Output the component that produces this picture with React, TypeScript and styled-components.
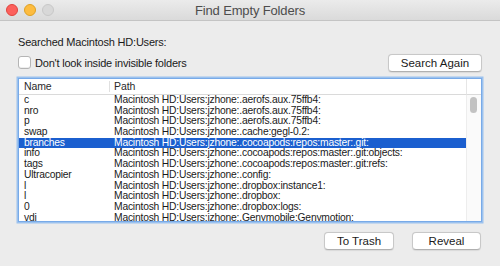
import React from "react";
import styled, { createGlobalStyle } from "styled-components";

const Global = createGlobalStyle`
  html, body { margin: 0; padding: 0; background: #ececec; }
  body { font-family: "Liberation Sans", Arial, sans-serif; color: #1a1a1a; }
  * { box-sizing: border-box; }
`;

const Window = styled.div`
  width: 500px;
  height: 266px;
  display: flex;
  flex-direction: column;
  background: #ececec;
  overflow: hidden;
`;

const TitleBar = styled.div`
  height: 21px;
  flex: none;
  display: grid;
  grid-template-columns: 80px 1fr 80px;
  align-items: center;
  background: linear-gradient(#ebebeb, #dadada);
  border-bottom: 1px solid #c4c4c4;
`;

const Lights = styled.div`
  display: flex;
  gap: 6px;
  padding-left: 6px;
  align-items: center;
`;

const Light = styled.span<{ $c: string; $b: string }>`
  width: 12px;
  height: 12px;
  border-radius: 50%;
  background: ${(p) => p.$c};
  border: 1px solid ${(p) => p.$b};
`;

const Title = styled.div`
  text-align: center;
  font-size: 13px;
  letter-spacing: -0.15px;
  color: #4d4d4d;
`;

const Body = styled.div`
  flex: 1;
  display: flex;
  flex-direction: column;
  padding: 14px 18px 0 18px;
`;

const Label = styled.div`
  font-size: 11px;
  letter-spacing: -0.2px;
  line-height: 14px;
  height: 14px;
`;

const OptionsRow = styled.div`
  margin-top: 5px;
  height: 17px;
  display: flex;
  align-items: center;
  justify-content: space-between;
`;

const Check = styled.label`
  display: flex;
  align-items: center;
  gap: 4px;
  font-size: 11px;
  letter-spacing: -0.2px;
`;

const Box = styled.span`
  width: 13px;
  height: 13px;
  border-radius: 3px;
  background: #fff;
  border: 1px solid #b5b5b5;
  box-shadow: inset 0 -1px 0 #eee;
`;

const Button = styled.button<{ $w: number }>`
  width: ${(p) => p.$w}px;
  height: 18px;
  padding: 0;
  font-family: "Liberation Sans", Arial, sans-serif;
  font-size: 11.5px;
  color: #1a1a1a;
  background: #fff;
  border: 1px solid #c8c8c8;
  border-bottom-color: #b0b0b0;
  border-radius: 4px;
  box-shadow: 0 0.5px 1px rgba(0, 0, 0, 0.08);
`;

const Table = styled.div`
  margin-top: 7px;
  height: 144px;
  border: 1px solid #78aae8;
  box-shadow: 0 0 0 1.5px #9cc2ee;
  background: #fff;
  display: flex;
  overflow: hidden;
`;

const Main = styled.div`
  flex: 1;
  display: flex;
  flex-direction: column;
`;

const Header = styled.div`
  height: 16px;
  flex: none;
  display: grid;
  grid-template-columns: 90px 1fr;
  border-bottom: 1px solid #dadada;
  font-size: 10.5px;
  letter-spacing: -0.1px;
  color: #2a2a2a;
`;

const HeadCell = styled.div<{ $div?: boolean }>`
  padding-left: ${(p) => (p.$div ? 4 : 5)}px;
  border-left: ${(p) => (p.$div ? "1px solid #e0e0e0" : "none")};
  margin: ${(p) => (p.$div ? "2px 0" : "0")};
  line-height: ${(p) => (p.$div ? "11px" : "15px")};
`;

const Row = styled.div<{ $sel?: boolean }>`
  height: 10.7px;
  display: grid;
  grid-template-columns: 90px 1fr;
  font-size: 10.3px;
  letter-spacing: -0.2px;
  line-height: 10.7px;
  white-space: nowrap;
  background: ${(p) => (p.$sel ? "#1b5fcf" : "transparent")};
  color: ${(p) => (p.$sel ? "#fff" : "#1a1a1a")};
`;

const Cell = styled.div`
  padding-left: 5px;
  overflow: hidden;
`;

const Scroll = styled.div`
  width: 15px;
  flex: none;
  display: flex;
  flex-direction: column;
`;

const ScrollHead = styled.div`
  height: 16px;
  border-bottom: 1px solid #dadada;
  border-left: 1px solid #e6e6e6;
`;

const Track = styled.div`
  flex: 1;
  border-left: 1px solid #ededed;
  background: #fafafa;
  padding: 2px 0 0 3px;
`;

const Thumb = styled.div`
  width: 7px;
  height: 16px;
  border-radius: 4px;
  background: #c2c2c2;
`;

const Footer = styled.div`
  margin-top: 10px;
  display: flex;
  justify-content: flex-end;
  gap: 18px;
  padding-right: 1px;
`;

const rows: [string, string][] = [
  ["c", "Macintosh HD:Users:jzhone:.aerofs.aux.75ffb4:"],
  ["nro", "Macintosh HD:Users:jzhone:.aerofs.aux.75ffb4:"],
  ["p", "Macintosh HD:Users:jzhone:.aerofs.aux.75ffb4:"],
  ["swap", "Macintosh HD:Users:jzhone:.cache:gegl-0.2:"],
  ["branches", "Macintosh HD:Users:jzhone:.cocoapods:repos:master:.git:"],
  ["info", "Macintosh HD:Users:jzhone:.cocoapods:repos:master:.git:objects:"],
  ["tags", "Macintosh HD:Users:jzhone:.cocoapods:repos:master:.git:refs:"],
  ["Ultracopier", "Macintosh HD:Users:jzhone:.config:"],
  ["l", "Macintosh HD:Users:jzhone:.dropbox:instance1:"],
  ["l", "Macintosh HD:Users:jzhone:.dropbox:"],
  ["0", "Macintosh HD:Users:jzhone:.dropbox:logs:"],
  ["vdi", "Macintosh HD:Users:jzhone:.Genymobile:Genymotion:"],
];

export default function App() {
  return (
    <Window>
      <Global />
      <TitleBar>
        <Lights>
          <Light $c="#fc605c" $b="#e0443e" />
          <Light $c="#fdbc40" $b="#dea123" />
          <Light $c="#d8d8d8" $b="#c8c8c8" />
        </Lights>
        <Title>Find Empty Folders</Title>
        <div />
      </TitleBar>
      <Body>
        <Label>Searched Macintosh HD:Users:</Label>
        <OptionsRow>
          <Check>
            <Box />
            Don't look inside invisible folders
          </Check>
          <Button $w={94}>Search Again</Button>
        </OptionsRow>
        <Table>
          <Main>
            <Header>
              <HeadCell>Name</HeadCell>
              <HeadCell $div>Path</HeadCell>
            </Header>
            {rows.map(([n, p], i) => (
              <Row key={i} $sel={i === 4}>
                <Cell>{n}</Cell>
                <Cell>{p}</Cell>
              </Row>
            ))}
          </Main>
          <Scroll>
            <ScrollHead />
            <Track>
              <Thumb />
            </Track>
          </Scroll>
        </Table>
        <Footer>
          <Button $w={70}>To Trash</Button>
          <Button $w={69}>Reveal</Button>
        </Footer>
      </Body>
    </Window>
  );
}
